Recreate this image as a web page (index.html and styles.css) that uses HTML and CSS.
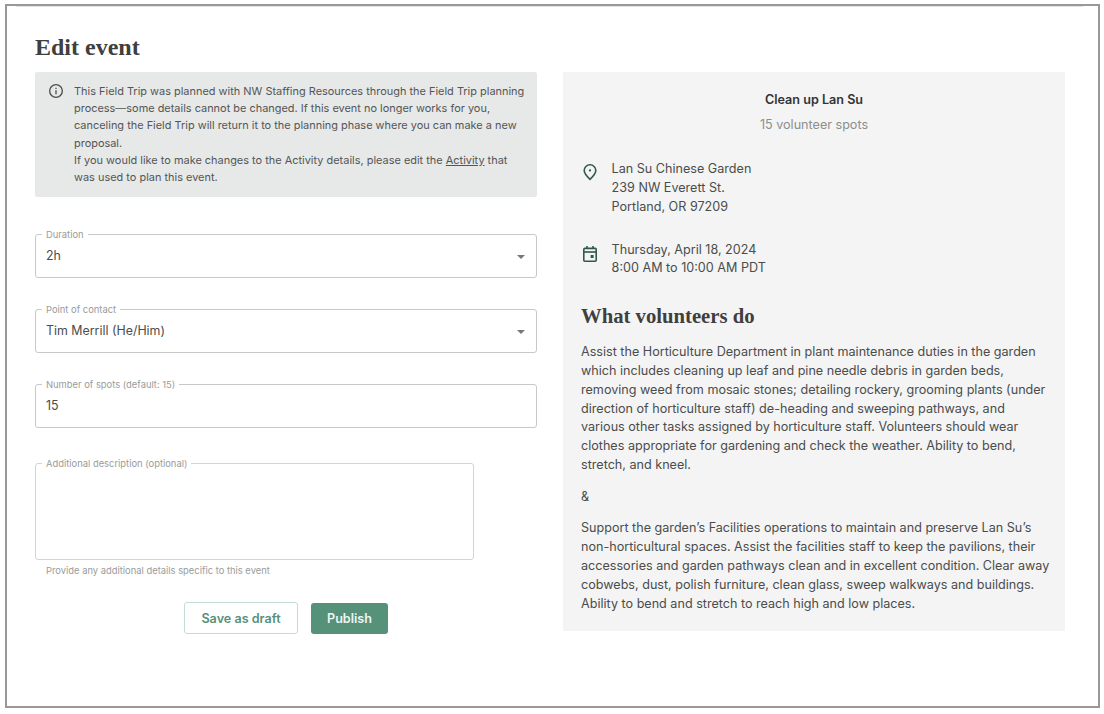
FILE: index.html
```html
<!DOCTYPE html>
<html lang="en">
<head>
    <meta charset="UTF-8">
    <title>Edit event</title>
    <link rel="stylesheet" href="styles.css">
</head>
<body>

<div class="frame">
    <div class="top-rule"></div>
    <h1>Edit event</h1>

    <div class="columns">
        <div class="form-col">
            <div class="notice">
                <svg class="notice-icon" width="16" height="16" viewBox="0 0 24 24" fill="none" stroke="#4a4f4d" stroke-width="2">
                    <circle cx="12" cy="12" r="9.5"/>
                    <path d="M12 11v6"/>
                    <path d="M12 7v2"/>
                </svg>
                <p>This Field Trip was planned with NW Staffing Resources through the Field Trip planning process—some details cannot be changed. If this event no longer works for you, canceling the Field Trip will return it to the planning phase where you can make a new proposal.<br>If you would like to make changes to the Activity details, please edit the <a href="#">Activity</a> that was used to plan this event.</p>
            </div>

            <fieldset class="field">
                <legend>Duration</legend>
                <span class="value">2h</span>
                <span class="caret"></span>
            </fieldset>

            <fieldset class="field">
                <legend>Point of contact</legend>
                <span class="value">Tim Merrill (He/Him)</span>
                <span class="caret"></span>
            </fieldset>

            <fieldset class="field">
                <legend>Number of spots (default: 15)</legend>
                <span class="value">15</span>
            </fieldset>

            <fieldset class="field field-area">
                <legend>Additional description (optional)</legend>
            </fieldset>
            <div class="help">Provide any additional details specific to this event</div>

            <div class="actions">
                <button class="btn-outline">Save as draft</button>
                <button class="btn-solid">Publish</button>
            </div>
        </div>

        <div class="summary">
            <div class="summary-title">Clean up Lan Su</div>
            <div class="summary-spots">15 volunteer spots</div>

            <div class="info-row info-place">
                <svg width="16" height="18" viewBox="0 0 16 18" fill="none" stroke="#2f5a4a" stroke-width="1.6">
                    <path d="M8 16.4C4.6 13.2 2.2 10.6 2.2 7.6a5.8 5.8 0 0 1 11.6 0c0 3-2.4 5.6-5.8 8.8z"/>
                    <circle cx="8" cy="7.4" r="1.1" fill="#2f5a4a" stroke="none"/>
                </svg>
                <div>Lan Su Chinese Garden<br>239 NW Everett St.<br>Portland, OR 97209</div>
            </div>

            <div class="info-row info-date">
                <svg width="16" height="18" viewBox="0 0 16 18" fill="none" stroke="#2f5a4a" stroke-width="1.6">
                    <rect x="1.8" y="3.4" width="12.4" height="12.8" rx="1"/>
                    <path d="M2 7h12"/>
                    <path d="M5 1v3M11 1v3"/>
                    <rect x="8.6" y="10" width="3" height="3" fill="#2f5a4a" stroke="none"/>
                </svg>
                <div>Thursday, April 18, 2024<br>8:00 AM to 10:00 AM PDT</div>
            </div>

            <h2>What volunteers do</h2>
            <p>Assist the Horticulture Department in plant maintenance duties in the garden which includes cleaning up leaf and pine needle debris in garden beds, removing weed from mosaic stones; detailing rockery, grooming plants (under direction of horticulture staff) de-heading and sweeping pathways, and various other tasks assigned by horticulture staff. Volunteers should wear clothes appropriate for gardening and check the weather. Ability to bend, stretch, and kneel.</p>
            <p>&amp;</p>
            <p>Support the garden’s Facilities operations to maintain and preserve Lan Su’s non-horticultural spaces. Assist the facilities staff to keep the pavilions, their accessories and garden pathways clean and in excellent condition. Clear away cobwebs, dust, polish furniture, clean glass, sweep walkways and buildings. Ability to bend and stretch to reach high and low places.</p>
        </div>
    </div>
</div>

</body>
</html>
```

FILE: styles.css
```css
html, body {
    margin: 0;
    height: 100%;
    background: white;
}

body {
    padding: 4px 0 0 5px;
    box-sizing: border-box;
    font-family: Inter, "Noto Sans", sans-serif;
    color: #3a3d3c;
}

.frame {
    box-sizing: border-box;
    width: 1095px;
    height: 704px;
    border: 2px solid #999;
    padding: 0 0 0 28px;
}

.top-rule {
    height: 1px;
    margin: 0 15px 25px -19px;
    background: #dfe3e1;
}

h1 {
    margin: 0 0 10px;
    font-family: "Liberation Serif", serif;
    font-size: 24px;
    line-height: 30px;
    font-weight: 700;
    color: #3f3f3f;
}

.columns {
    display: flex;
    gap: 26px;
    align-items: flex-start;
}

.form-col {
    width: 502px;
    flex: none;
}

.notice {
    display: flex;
    gap: 10px;
    background: #e6e9e8;
    border-radius: 2px;
    padding: 11px 10px 9px 13px;
    height: 125px;
    box-sizing: border-box;
    font-size: 10.95px;
    line-height: 17.2px;
    color: #555;
    margin-bottom: 32px;
}

.notice p {
    margin: 0;
}

.notice a {
    color: inherit;
}

.notice-icon {
    flex: none;
}

.field {
    position: relative;
    box-sizing: border-box;
    height: 49px;
    margin: 0 0 26px;
    padding: 0 10px;
    border: 1px solid #c8c8c8;
    border-radius: 3px;
    min-width: 0;
}

.field legend {
    padding: 0 4px;
    margin-left: -4px;
    font-size: 9.4px;
    line-height: 11px;
    color: #989c9b;
}

.value {
    display: block;
    font-size: 12.4px;
    line-height: 16px;
    padding-top: 8px;
    color: #4a4d4c;
}

.caret {
    position: absolute;
    right: 11px;
    top: 15px;
    width: 0;
    height: 0;
    border-left: 4px solid transparent;
    border-right: 4px solid transparent;
    border-top: 4px solid #777;
}

.field-area {
    width: 439px;
    height: 102px;
    margin: 30px 0 0;
    border-color: #d4d4d4;
}

.help {
    padding: 5px 0 0 11px;
    font-size: 9.4px;
    line-height: 12px;
    color: #989c9b;
}

.actions {
    display: flex;
    justify-content: center;
    gap: 13px;
    align-items: center;
    margin-top: 25px;
}

button {
    font-family: inherit;
    font-size: 12.6px;
    font-weight: 600;
    border-radius: 3px;
    padding: 0;
}

.btn-outline {
    width: 114px;
    height: 32px;
    background: white;
    color: #56917a;
    border: 1px solid #c4ddd3;
}

.btn-solid {
    width: 77px;
    height: 31px;
    background: #56917a;
    color: #eef5f2;
    border: none;
}

.summary {
    width: 502px;
    flex: none;
    box-sizing: border-box;
    height: 559px;
    padding: 19px 14px 0 18px;
    background: #f4f4f4;
    font-size: 12.6px;
    line-height: 18.9px;
    color: #4a4d4c;
}

.summary-title {
    margin-right: 4px;
    text-align: center;
    font-weight: 600;
    color: #333;
}

.summary-spots {
    margin: 6px 4px 0 0;
    text-align: center;
    color: #8b8f8e;
}

.info-row {
    display: flex;
    gap: 13.6px;
}

.info-row svg {
    flex: none;
    margin-left: 1px;
}

.info-place {
    margin-top: 25px;
}

.info-place svg {
    margin-top: 3px;
}

.info-date {
    margin-top: 24px;
}

.info-date svg {
    margin-top: 4px;
}

h2 {
    margin: 24.5px 0 14px;
    font-family: "Liberation Serif", serif;
    font-size: 20.7px;
    line-height: 26px;
    font-weight: 700;
    color: #3f3f3f;
}

.summary p {
    margin: 0 0 12.4px;
}
```
